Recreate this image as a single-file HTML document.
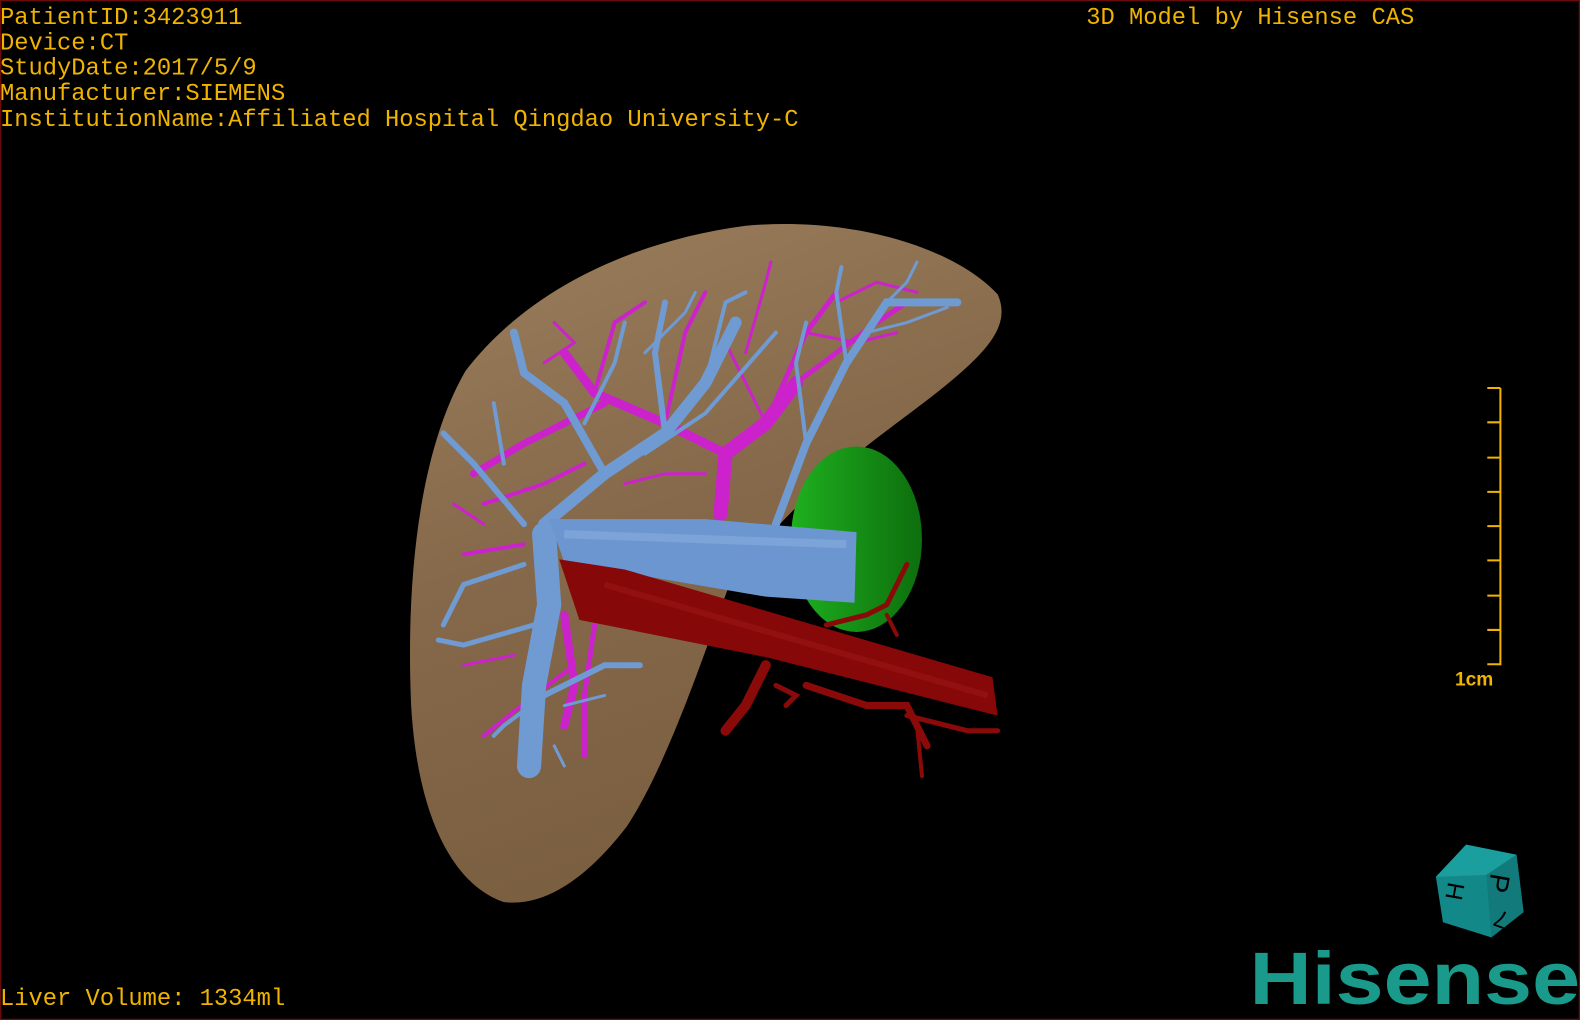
<!DOCTYPE html>
<html><head><meta charset="utf-8"><style>
html,body{margin:0;padding:0;background:#000;width:1580px;height:1020px;overflow:hidden}
svg{display:block}
</style></head><body>
<svg width="1580" height="1020" viewBox="0 0 1568 1012" preserveAspectRatio="none">
<defs>
<linearGradient id="lv" x1="0" y1="0" x2="0.3" y2="1">
<stop offset="0" stop-color="#9a7e5c"/><stop offset="0.5" stop-color="#86694a"/><stop offset="1" stop-color="#7a5e40"/>
</linearGradient>
<linearGradient id="gr" x1="0" y1="0" x2="1" y2="0">
<stop offset="0" stop-color="#1fb01f"/><stop offset="1" stop-color="#0d6e0d"/>
</linearGradient>
</defs>
<rect x="0.5" y="0.5" width="1567" height="1011" fill="#000" stroke="#6a0c0c" stroke-width="1.5"/>
<path d="M500,895 C455,880 415,820 408,700 C402,560 420,440 462,368 C520,292 620,240 740,224 C850,214 950,248 990,292 C1002,318 985,340 962,362 C900,420 800,470 722,585 C700,645 662,760 622,820 C582,872 540,900 500,895 Z" fill="url(#lv)"/>
<ellipse cx="850" cy="535" rx="65" ry="92" fill="url(#gr)"/>
<g stroke="#cc22cc" fill="none" stroke-linecap="round">
<path d="M715,510 L720,450 L760,420 L790,380" stroke-width="14"/>
<path d="M720,450 L660,420 L590,390 L560,350" stroke-width="9"/>
<path d="M600,400 L520,440 L470,470" stroke-width="7"/>
<path d="M760,420 L800,330 L830,290" stroke-width="5"/>
<path d="M790,380 L870,320 L900,300" stroke-width="5"/>
<path d="M660,420 L680,330 L700,290" stroke-width="4"/>
<path d="M590,390 L610,320 L640,300" stroke-width="4"/>
<path d="M740,350 L760,280 L765,260" stroke-width="3"/>
<path d="M480,500 L540,480 L580,460" stroke-width="4"/>
<path d="M460,550 L520,540" stroke-width="4"/>
<path d="M560,610 L570,680 L560,720" stroke-width="8"/>
<path d="M590,620 L580,690 L580,750" stroke-width="5"/>
<path d="M480,730 L530,690 L570,660" stroke-width="4"/>
<path d="M460,660 L510,650" stroke-width="3"/>
<path d="M830,300 L870,280 L910,290" stroke-width="3"/>
<path d="M540,360 L570,340 L550,320" stroke-width="3"/>
<path d="M760,420 L740,380 L720,340" stroke-width="3"/>
<path d="M800,330 L850,340 L890,330" stroke-width="3"/>
<path d="M480,520 L450,500" stroke-width="3"/>
<path d="M700,470 L660,470 L620,480" stroke-width="3"/>
</g>
<g stroke="#6f9ad2" fill="none" stroke-linecap="round">
<path d="M540,530 L545,600 L530,680 L525,760" stroke-width="24"/>
<path d="M540,520 L600,470 L660,430 L700,380 L730,320" stroke-width="12"/>
<path d="M600,470 L560,400 L520,370 L510,330" stroke-width="8"/>
<path d="M660,430 L650,350 L660,300" stroke-width="6"/>
<path d="M770,520 L800,440 L840,360 L880,300 L950,300" stroke-width="8"/>
<path d="M840,360 L830,290 L835,265" stroke-width="4"/>
<path d="M800,440 L790,360 L800,320" stroke-width="4"/>
<path d="M700,380 L720,300 L740,290" stroke-width="4"/>
<path d="M520,520 L470,460 L440,430" stroke-width="6"/>
<path d="M520,560 L460,580 L440,620" stroke-width="5"/>
<path d="M530,620 L460,640 L435,635" stroke-width="5"/>
<path d="M540,690 L600,660 L635,660" stroke-width="6"/>
<path d="M540,690 L500,720 L490,730" stroke-width="4"/>
<path d="M580,420 L610,360 L620,320" stroke-width="4"/>
<path d="M640,350 L680,310 L690,290" stroke-width="3"/>
<path d="M880,300 L900,280 L910,260" stroke-width="3"/>
<path d="M500,460 L490,400" stroke-width="4"/>
<path d="M640,450 L700,410 L770,330" stroke-width="4"/>
<path d="M860,330 L900,320 L940,305" stroke-width="3"/>
<path d="M560,700 L600,690" stroke-width="3"/>
<path d="M550,740 L560,760" stroke-width="3"/>
</g>
<path d="M545,515 L700,515 L850,528 L848,598 L760,592 L560,558 Z" fill="#6c96d0"/>
<path d="M560,530 L840,540" stroke="#88aee0" stroke-width="8" opacity="0.6"/>
<g stroke="#8a0a0a" fill="none" stroke-linecap="round">
<path d="M760,660 L740,700 L720,725" stroke-width="10"/>
<path d="M800,680 L860,700 L900,700 L920,740" stroke-width="7"/>
<path d="M900,710 L960,725 L990,725" stroke-width="5"/>
<path d="M910,720 L915,770" stroke-width="4"/>
<path d="M820,620 L860,610 L880,600 L900,560" stroke-width="5"/>
<path d="M880,610 L890,630" stroke-width="4"/>
<path d="M770,680 L790,690 L780,700" stroke-width="5"/>
</g>
<path d="M555,555 L620,565 L985,672 L990,710 L760,652 L575,615 Z" fill="#860808"/>
<path d="M600,580 L980,690" stroke="#a01818" stroke-width="6" opacity="0.5"/>
<g stroke="#f0b400" stroke-width="2" fill="none">
<path d="M1489,385 L1489,660"/>
<path d="M1476,385H1489M1476,419H1489M1476,454H1489M1476,488H1489M1476,522H1489M1476,556H1489M1476,591H1489M1476,625H1489M1476,659H1489"/>
</g>
<text x="1444" y="680" fill="#f0b400" font-family="Liberation Sans, sans-serif" font-size="19" font-weight="bold">1cm</text>
<polygon points="1425,870 1455,838 1505,848 1512,905 1480,930 1432,915" fill="#138888"/>
<polygon points="1425,870 1455,838 1505,848 1475,868" fill="#1a9e9e"/>
<polygon points="1475,868 1505,848 1512,905 1480,930" fill="#127a7a"/>
<text x="1478" y="885" font-family="Liberation Sans, sans-serif" font-size="28" fill="#000" transform="rotate(100 1487 876)">P</text>
<text x="1436" y="893" font-family="Liberation Sans, sans-serif" font-size="24" fill="#000" transform="rotate(-80 1444 885)">H</text>
<text x="1484" y="922" font-family="Liberation Sans, sans-serif" font-size="24" fill="#000" transform="rotate(200 1490 913)">7</text>
<text x="1240" y="996" fill="#1a9a8a" font-family="Liberation Sans, sans-serif" font-weight="bold" font-size="74" textLength="328" lengthAdjust="spacingAndGlyphs">Hisense</text>
<g fill="#f0b400" font-family="Liberation Mono, monospace" font-size="23.6">
<text x="0" y="24">PatientID:3423911</text>
<text x="0" y="49">Device:CT</text>
<text x="0" y="74">StudyDate:2017/5/9</text>
<text x="0" y="99">Manufacturer:SIEMENS</text>
<text x="0" y="125">InstitutionName:Affiliated Hospital Qingdao University-C</text>
<text x="1078" y="24">3D Model by Hisense CAS</text>
<text x="0" y="997">Liver Volume: 1334ml</text>
</g>
</svg>
</body></html>
